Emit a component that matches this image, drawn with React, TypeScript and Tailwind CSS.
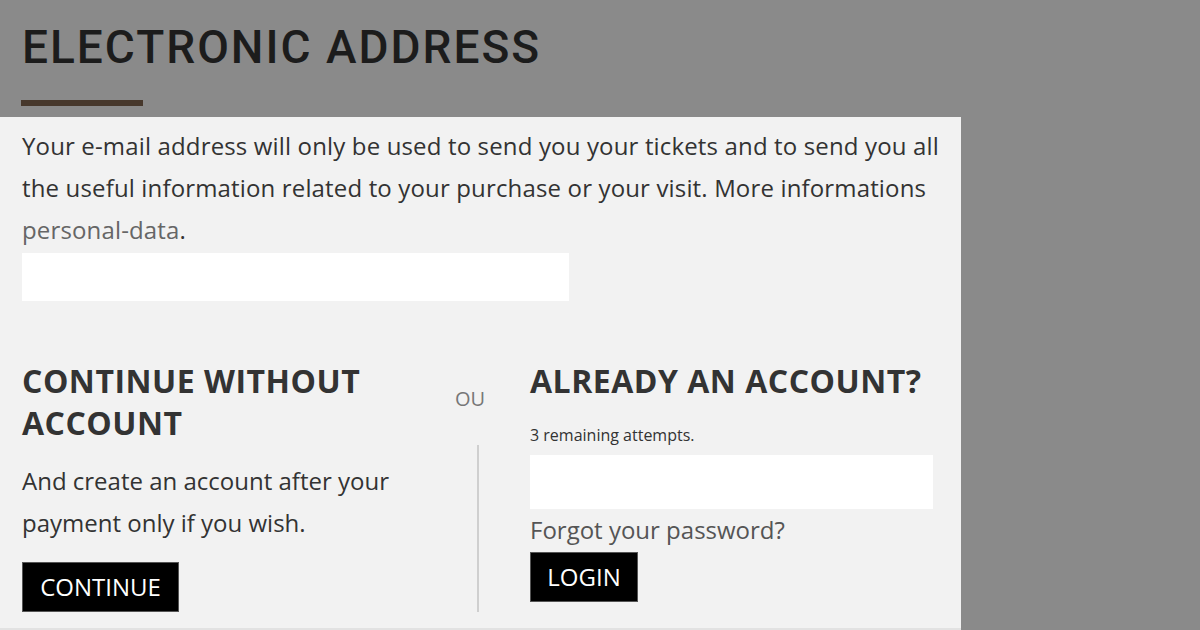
import { useState } from "react";

export default function App() {
  const [email, setEmail] = useState("");
  const [password, setPassword] = useState("");

  return (
    <div className="w-[1200px] h-[630px] overflow-hidden bg-[#8a8a8a] font-['Open_Sans',sans-serif]">
      {/* Header */}
      <div className="w-[962px] h-[117px] pl-[22px] pt-[21px]">
        <h1 className="font-['Roboto',sans-serif] font-medium text-[46px] leading-[52px] tracking-[2px] text-[#1c1c1c]">
          ELECTRONIC ADDRESS
        </h1>
        <div className="mt-[27px] ml-[-1px] w-[122px] h-[6px] bg-[#47382c]" />
      </div>

      {/* Panel */}
      <div className="w-[961px] h-[513px] bg-[#f2f2f2] pl-[22px] pt-[8px] border-b-2 border-[#e2e2e2]">
        <p className="text-[24px] leading-[42px] tracking-[0.15px] text-[#333] w-[935px]">
          Your e-mail address will only be used to send you your tickets and to send you all
          the useful information related to your purchase or your visit. More informations{" "}
          <a className="text-[#666]">personal-data</a>.
        </p>
        <input
          value={email}
          onChange={(e) => setEmail(e.target.value)}
          className="block mt-[2px] w-[547px] h-[48px] bg-white outline-none px-3 text-[20px]"
        />

        <div className="flex mt-[59px]">
          {/* Continue without account */}
          <div className="w-[418px]">
            <h2 className="text-[32px] leading-[42px] font-bold tracking-[0.5px] text-[#333]">
              CONTINUE WITHOUT ACCOUNT
            </h2>
            <p className="mt-[16px] text-[24px] leading-[42px] text-[#333] w-[395px]">
              And create an account after your payment only if you wish.
            </p>
            <button className="mt-[18px] h-[50px] w-[157px] bg-black border border-[#555] text-white text-[24px]">
              CONTINUE
            </button>
          </div>

          {/* Separator */}
          <div className="w-[90px] flex flex-col">
            <span className="pl-[15px] mt-[27px] text-[20px] leading-[24px] text-[#777]">OU</span>
            <div className="ml-[37px] mt-[34px] w-[2px] h-[167px] bg-[#cfcfcf]" />
          </div>

          {/* Already an account */}
          <div className="w-[404px]">
            <h2 className="text-[32px] leading-[42px] font-bold tracking-[0.5px] text-[#333]">
              ALREADY AN ACCOUNT?
            </h2>
            <p className="mt-[23px] text-[16px] leading-[20px] text-[#333]">3 remaining attempts.</p>
            <input
              type="password"
              value={password}
              onChange={(e) => setPassword(e.target.value)}
              className="block mt-[10px] w-[403px] h-[54px] bg-white outline-none px-3 text-[20px]"
            />
            <a className="block mt-[6px] text-[24px] leading-[30px] text-[#555]">Forgot your password?</a>
            <button className="mt-[7px] h-[50px] w-[108px] bg-black border border-[#555] text-white text-[24px]">
              LOGIN
            </button>
          </div>
        </div>
      </div>
    </div>
  );
}
